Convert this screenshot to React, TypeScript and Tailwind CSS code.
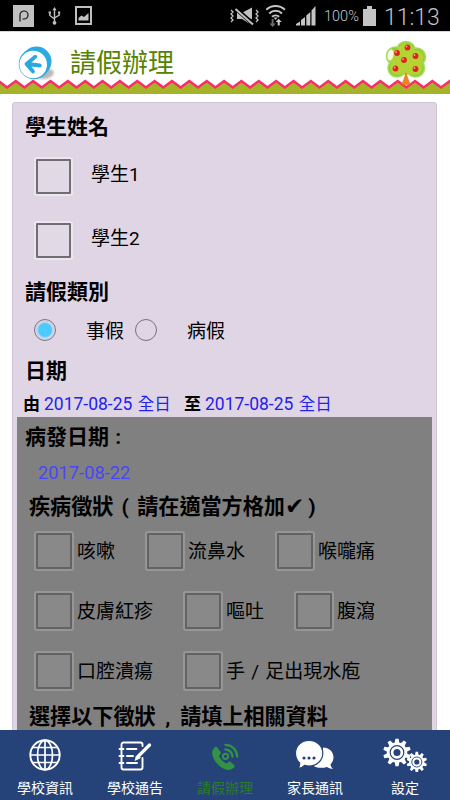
import { useState, type ReactNode } from "react"

const students = ["學生1", "學生2"]

const symptoms = [
  ["咳嗽", "流鼻水", "喉嚨痛"],
  ["皮膚紅疹", "嘔吐", "腹瀉"],
  ["口腔潰瘍", "手 / 足出現水庖"],
]

// one point per peak / trough
const zigzag = Array.from({ length: 55 }, (_, i) => `${(-10.3 + i * 8.68).toFixed(2)},${i % 2 ? 2 : 8.5}`).join(" ")

const StatusBar = () => (
  <div className="flex h-[31px] shrink-0 items-center bg-black pl-[13px] pr-[12px] text-[#c4c4c4]">
    {/* Notifications */}
    <svg width="21" height="22" viewBox="0 0 21 22">
      <rect width="21" height="22" fill="#c0c0c0" />
      <path d="M7 16.500V10a4 4 0 1 1 4 4H9.500" fill="none" stroke="#111" strokeWidth="1.200" />
    </svg>
    <svg className="ml-[14px]" width="13" height="18" viewBox="0 0 13 18" fill="none" stroke="#c0c0c0" strokeWidth="1.4">
      <path d="M6.5 2v13M1.8 6v2.5l4.7 3.5M11.2 6v2l-4.7 3" />
      <path d="M6.5 0l2 3.2h-4zM.6 4.4h2.4v2.2H.6zM10 4.400h2.200v2.200H10z" fill="#c0c0c0" stroke="none" />
      <circle cx="6.5" cy="15.8" r="1.9" fill="#c0c0c0" stroke="none" />
    </svg>
    <svg className="ml-[14px]" width="17" height="19" viewBox="0 0 17 19">
      <rect x="1" y="1" width="15" height="17" fill="none" stroke="#c0c0c0" strokeWidth="2" />
      <path d="M3.500 14.500V12l3-2.500L9 11l4.500-4v7.500z" fill="#c0c0c0" />
    </svg>

    {/* Device state */}
    <svg className="ml-auto" width="30" height="20" viewBox="0 0 30 20" fill="none" stroke="#c0c0c0" strokeWidth="1.3">
      <path d="M1 4l2 2-2 2 2 2-2 2 2 2-2 2M26 4l2 2-2 2 2 2-2 2 2 2-2 2" />
      <path d="M9.500 6.500h3L22 1.500v12zM7 6.500v6.500h5l8 5z" fill="#c0c0c0" stroke="none" />
      <path d="M6.500 2.500l17 15.500" stroke="#000" strokeWidth="3.500" />
      <path d="M5.500 3l17.500 15.500" strokeWidth="2" />
    </svg>
    <svg className="ml-[5px]" width="22" height="23" viewBox="0 0 22 23" fill="none" stroke="#c4c4c4" strokeWidth="2">
      <path d="M1.300 5.800a13.600 13.600 0 0 1 18.600 0M4.200 9.400a9.300 9.300 0 0 1 12.800 0M7 12.800a5.400 5.400 0 0 1 7.200 0" />
      <path d="M10.600 16l-2-2.600h4z" fill="#c4c4c4" stroke="none" />
      <path d="M8.600 15v4.500h2.200l-3.200 3.500-3.200-3.500h2.200V15z" fill="#6c6c6c" stroke="none" />
      <path d="M12.700 21.500V18h-2l3-3.300 3 3.300h-2v3.500z" fill="#d0d0d0" stroke="none" />
    </svg>
    <svg className="ml-[8px]" width="22" height="21" viewBox="0 0 22 21" fill="#c4c4c4">
      <path d="M1 20.500V19l4-2.500v4zM6 20.500V15l4-3v8.500zM11.300 20.500v-10l4-3.500v13.500zM16.500 20.500V5.500l4-4.500v19.500z" />
    </svg>
    <span className="ml-[7px] mt-[3px] w-[36px] whitespace-nowrap text-[14.500px] font-light leading-none">100%</span>
    <svg className="ml-[3px]" width="13" height="20" viewBox="0 0 13 20" fill="#c4c4c4">
      <path d="M0 3h4V0h5v3h4v17H0z" />
    </svg>
    <span className="ml-[8px] mt-[4px] w-[54px] whitespace-nowrap text-[23px] font-light leading-none">11:13</span>
  </div>
)

const BackIcon = () => (
  <svg width="38" height="36" viewBox="0 0 38 36">
    <defs>
      <filter id="soft" x="-30%" y="-30%" width="160%" height="160%">
        <feGaussianBlur stdDeviation="1.2" />
      </filter>
    </defs>
    <ellipse cx="27" cy="28" rx="9" ry="5" fill="#999" opacity=".7" filter="url(#soft)" transform="rotate(-12 27 28)" />
    <circle cx="18.500" cy="15.500" r="15" fill="#29abe2" />
    <circle cx="16" cy="18" r="15.300" fill="#29abe2" />
    <circle cx="15.200" cy="18.500" r="13.800" fill="#fff" />
    <path d="M21.800 19.500L9 18M17.300 10.800L8.500 18l6.500 7.500" fill="none" stroke="#29a8dc" strokeWidth="3.800" strokeLinecap="round" strokeLinejoin="round" />
  </svg>
)

const TreeIcon = () => (
  <svg width="42" height="48" viewBox="0 0 42 48">
    <g fill="#8ccb3a" stroke="#a4dc5c" strokeWidth="1.500">
      <circle cx="21" cy="11" r="9.500" />
      <circle cx="10.500" cy="16" r="9" />
      <circle cx="31.500" cy="17" r="9" />
      <circle cx="12" cy="28" r="9" />
      <circle cx="30.500" cy="28" r="9" />
    </g>
    <g fill="#b4d334">
      <circle cx="21" cy="12" r="8.500" />
      <circle cx="11" cy="17" r="7.500" />
      <circle cx="31" cy="17.500" r="7.500" />
      <circle cx="12.500" cy="27.500" r="7.500" />
      <circle cx="30" cy="27.500" r="7.500" />
      <circle cx="21" cy="24" r="11" />
    </g>
    <ellipse cx="5.500" cy="15" rx="3" ry="5.500" fill="#f4fae4" transform="rotate(12 5.500 15)" />
    <path d="M21 31.500c1 4 2.500 8 4.500 12.500-3 1.500-6.500 1.500-9 0 2-4.500 3.500-8.500 4.500-12.500z" fill="#f0832a" />
    <g fill="#e0221c">
      <circle cx="22.500" cy="7.500" r="2.900" />
      <circle cx="12" cy="13" r="2.900" />
      <circle cx="30.500" cy="16" r="2.900" />
      <circle cx="19" cy="20" r="2.900" />
      <circle cx="10.500" cy="28.500" r="2.900" />
      <circle cx="30.500" cy="29" r="2.900" />
    </g>
    <g fill="#f9a6a0">
      <circle cx="21.500" cy="6.500" r=".9" />
      <circle cx="11" cy="12" r=".9" />
      <circle cx="29.500" cy="15" r=".9" />
      <circle cx="18" cy="19" r=".9" />
      <circle cx="9.500" cy="27.500" r=".9" />
      <circle cx="29.500" cy="28" r=".9" />
    </g>
  </svg>
)

const Header = () => (
  <header className="relative h-[63px] shrink-0 border-t border-[#d8d8d8] bg-white">
    <div className="flex items-start pl-[18px] pt-[14px]">
      <BackIcon />
      <h1 className="ml-[14px] mt-[-2px] text-[26px] leading-[38px] text-[#568203]">請假辦理</h1>
    </div>
    {/* Grass strip */}
    <svg className="absolute bottom-0 left-0" width="450" height="15" viewBox="0 0 450 15">
      <polygon points={`${zigzag} 460,15 -10,15`} fill="#a3b526" />
      <polyline points={zigzag} fill="none" stroke="#fa2e66" strokeWidth="2.600" />
    </svg>
    <div className="absolute right-[23px] top-[8px]">
      <TreeIcon />
    </div>
  </header>
)

const CheckBox = ({ dark }: { dark?: boolean }) => {
  const [checked, setChecked] = useState(false)

  return (
    <button
      onClick={() => setChecked(!checked)}
      className={
        dark
          ? "h-[36px] w-[36px] shrink-0 rounded-[1px] border-2 border-[#636363] bg-[#898989] text-xl leading-none shadow-[0_0_0_2px_#969696]"
          : "h-[35px] w-[35px] shrink-0 rounded-[1px] border-2 border-[#716d74] bg-[#e2d9e6] text-xl leading-none shadow-[0_0_0_2px_#ece6ee]"
      }
    >
      {checked ? "✓" : ""}
    </button>
  )
}

const Radio = ({ on, onClick }: { on: boolean; onClick: () => void }) => (
  <button
    onClick={onClick}
    className="mb-[2px] flex h-[22px] w-[22px] shrink-0 items-center justify-center rounded-full border border-[#77717a]"
  >
    {on && <span className="h-[14px] w-[14px] rounded-full bg-[#4acbfc] shadow-[0_0_2px_2px_#b5d3ee]" />}
  </button>
)

const LeaveForm = () => {
  const [type, setType] = useState(0)

  return (
    <div className="ml-[12px] mr-[13px] mt-[8px] h-[700px] rounded-[3px] border border-[#cfc6d3] bg-[#e0d5e5] text-black">
      <h2 className="flex h-[41px] items-center pl-[12px] pt-[8px] text-[21px] font-bold">學生姓名</h2>
      {students.map((s) => (
        <div key={s} className="flex h-16 items-center pl-[23px]">
          <CheckBox />
          <span className="ml-[20px] pb-[2px] text-[19px]">{s}</span>
        </div>
      ))}

      <h2 className="flex h-10 items-center pl-[12px] pt-[2px] text-[21px] font-bold">請假類別</h2>
      <div className="flex h-[37px] items-center pl-[21px] text-[19px]">
        <Radio on={type === 0} onClick={() => setType(0)} />
        <span className="ml-[30px] mr-[11px] pt-[3px]">事假</span>
        <Radio on={type === 1} onClick={() => setType(1)} />
        <span className="ml-[30px] pt-[3px]">病假</span>
      </div>

      <h2 className="flex h-[44px] items-center pl-[12px] pt-[2px] text-[21px] font-bold">日期</h2>
      <div className="flex h-[24px] items-center whitespace-nowrap pb-[1px] pl-[10px] text-[17.500px] text-[#2222ee]">
        <b className="w-[21px] text-[17px] text-black">由</b>
        <span className="w-[140px]">2017-08-25 <span className="ml-[1px] text-[16.500px]">全日</span></span>
        <b className="w-[21px] text-[17px] text-black">至</b>
        <span>2017-08-25 <span className="ml-[1px] text-[16.500px]">全日</span></span>
      </div>

      {/* Sick leave details */}
      <div className="ml-[4px] mr-[4px] h-[400px] bg-[#808080]">
        <h2 className="flex h-[41px] items-center pl-[8px] pt-[1px] text-[21px] font-bold [word-spacing:1px]">病發日期 :</h2>
        <div className="flex h-[30px] items-center pl-[21px] text-[18.300px] text-[#4646ff]">2017-08-22</div>
        <h2 className="flex h-[33px] items-center whitespace-pre pl-[12px] pt-[4px] text-[21.100px] font-bold [word-spacing:3px]">
          疾病徵狀 ( 請在適當方格加
          <span className="font-['DejaVu_Sans'] text-[23px] leading-none">✔</span>
          <span className="ml-[4px]">)</span>
        </h2>
        {symptoms.map((row) => (
          <div key={row[0]} className="flex h-[60px] items-center gap-[32px] pl-[19px]">
            {row.map((s) => (
              <div key={s} className="flex items-center gap-[5px] whitespace-nowrap text-[19px] [word-spacing:1.500px]">
                <CheckBox dark />
                <span className="pt-[2px]">{s}</span>
              </div>
            ))}
          </div>
        ))}
        <h2 className="flex h-[32px] items-center whitespace-nowrap pl-[12px] text-[21.100px] font-bold [word-spacing:4.500px]">
          選擇以下徵狀 , 請填上相關資料
        </h2>
      </div>
    </div>
  )
}

const GlobeIcon = () => (
  <svg width="32" height="32" viewBox="0 0 32 32" fill="none" stroke="#fff" strokeWidth="1.700">
    <circle cx="16" cy="16" r="14.700" strokeWidth="2" />
    <ellipse cx="16" cy="16" rx="7.500" ry="14.700" />
    <path d="M16 1v30M1 16h30M3.500 8.500h25M3.500 23.500h25" />
  </svg>
)

const NoteIcon = () => (
  <svg width="34" height="32" viewBox="0 0 34 32" fill="none" stroke="#fff" strokeWidth="1.900" strokeLinecap="round">
    <path d="M24.500 6V4.500a2 2 0 0 0-2-2h-17a2 2 0 0 0-2 2v23a2 2 0 0 0 2 2h17a2 2 0 0 0 2-2V18" />
    <path d="M1.500 9h4M1.500 16h4M1.500 23h4M9 9h9.500M9 16h6M9 23h10" />
    <path d="M19 17.500L31.500 5" strokeWidth="3.200" />
    <path d="M19.500 15.500l-2.500 4.800 5-2.300z" fill="#fff" strokeWidth="1" />
  </svg>
)

const PhoneIcon = () => (
  <svg width="28" height="28" viewBox="0 0 28 28" fill="none" stroke="#339344" strokeWidth="2.300">
    <path
      d="M3.500 4.500C1 7 .5 10 2 14c2.500 6 6.500 10 12 12.200 3.500 1.300 6.500.8 9-1.700.8-.8.7-2-.1-2.700l-3.300-2.700c-.8-.7-1.800-.6-2.500.1l-1.400 1.500c-3.500-1.600-6.300-4.500-7.900-8l1.500-1.400c.7-.7.8-1.700.1-2.500L6.300 4.600c-.7-.9-2-1-2.800-.1z"
      fill="#339344"
      stroke="none"
    />
    <path d="M14.500 1.800a12 12 0 0 1 11.700 11.700M14.500 6.500a7.200 7.200 0 0 1 7 7" strokeLinecap="round" />
    <circle cx="14.500" cy="13.300" r="2.600" strokeWidth="2" />
  </svg>
)

const ChatIcon = () => (
  <svg width="40" height="30" viewBox="0 0 40 30">
    <path d="M28 7.500c6 0 10.500 4.300 10.500 9.800 0 2.700-1.200 5.200-3 7 .2 1.800 1 3.300 2.500 4.700-2.500-.2-4.500-1-6-2-5.500 1.500-11 1-14-1.500 5-1.500 10-5 10-18z" fill="#fff" />
    <path d="M14 .5c7.700 0 13.800 5.500 13.800 12.700S21.700 26 14 26c-1.600 0-3-.2-4.500-.7C7.800 27 5.800 28 3.200 28.500c1-1.700 1.600-3.500 1.500-5.600C2 20.600.5 17 .5 13.200.5 6 6.500.5 14 .5z" fill="#fff" stroke="#264379" strokeWidth="1.200" />
    <g fill="#264379">
      <circle cx="9" cy="18" r="1.600" />
      <circle cx="14" cy="18" r="1.600" />
      <circle cx="19" cy="18" r="1.600" />
    </g>
  </svg>
)

const teeth = [0, 36, 72, 108, 144, 180, 216, 252, 288, 324]

const Gear = ({ x, y, scale }: { x: number; y: number; scale: number }) => (
  <g transform={`translate(${x} ${y}) scale(${scale})`}>
    {teeth.map((a) => (
      <path key={a} d="M-1.600-13.800h3.200L2.400-9h-4.800z" fill="#fff" transform={`rotate(${a})`} />
    ))}
    <circle r="10.200" fill="#fff" />
    <circle r="6.800" fill="none" stroke="#264379" strokeWidth="1.200" />
    <circle r="3.500" fill="#264379" />
  </g>
)

const SettingsIcon = () => (
  <svg width="44" height="34" viewBox="0 0 44 34">
    <Gear x={14} y={14.500} scale={1} />
    <Gear x={33.800} y={24} scale={0.74} />
  </svg>
)

const NavItem = ({ icon, label, active }: { icon: ReactNode; label: string; active?: boolean }) => (
  <button className="flex w-[90px] flex-col items-center">
    <span className="flex h-[49px] items-center justify-center">{icon}</span>
    <span className={active ? "text-[14px] leading-[18px] text-[#2b7c2a]" : "text-[14px] leading-[18px] text-white"}>
      {label}
    </span>
  </button>
)

export default function App() {
  return (
    <div className="flex h-[800px] w-[450px] flex-col overflow-hidden bg-white font-['Roboto','Noto_Sans_CJK_TC',sans-serif]">
      <StatusBar />
      <Header />
      <main className="min-h-0 flex-1 overflow-hidden">
        <LeaveForm />
      </main>
      <nav className="flex h-[70px] shrink-0 bg-[#264379]">
        <NavItem icon={<GlobeIcon />} label="學校資訊" />
        <NavItem icon={<div className="pt-[3px]"><NoteIcon /></div>} label="學校通告" />
        <NavItem icon={<div className="pt-[5px]"><PhoneIcon /></div>} label="請假辦理" active />
        <NavItem icon={<ChatIcon />} label="家長通訊" />
        <NavItem icon={<SettingsIcon />} label="設定" />
      </nav>
    </div>
  )
}
